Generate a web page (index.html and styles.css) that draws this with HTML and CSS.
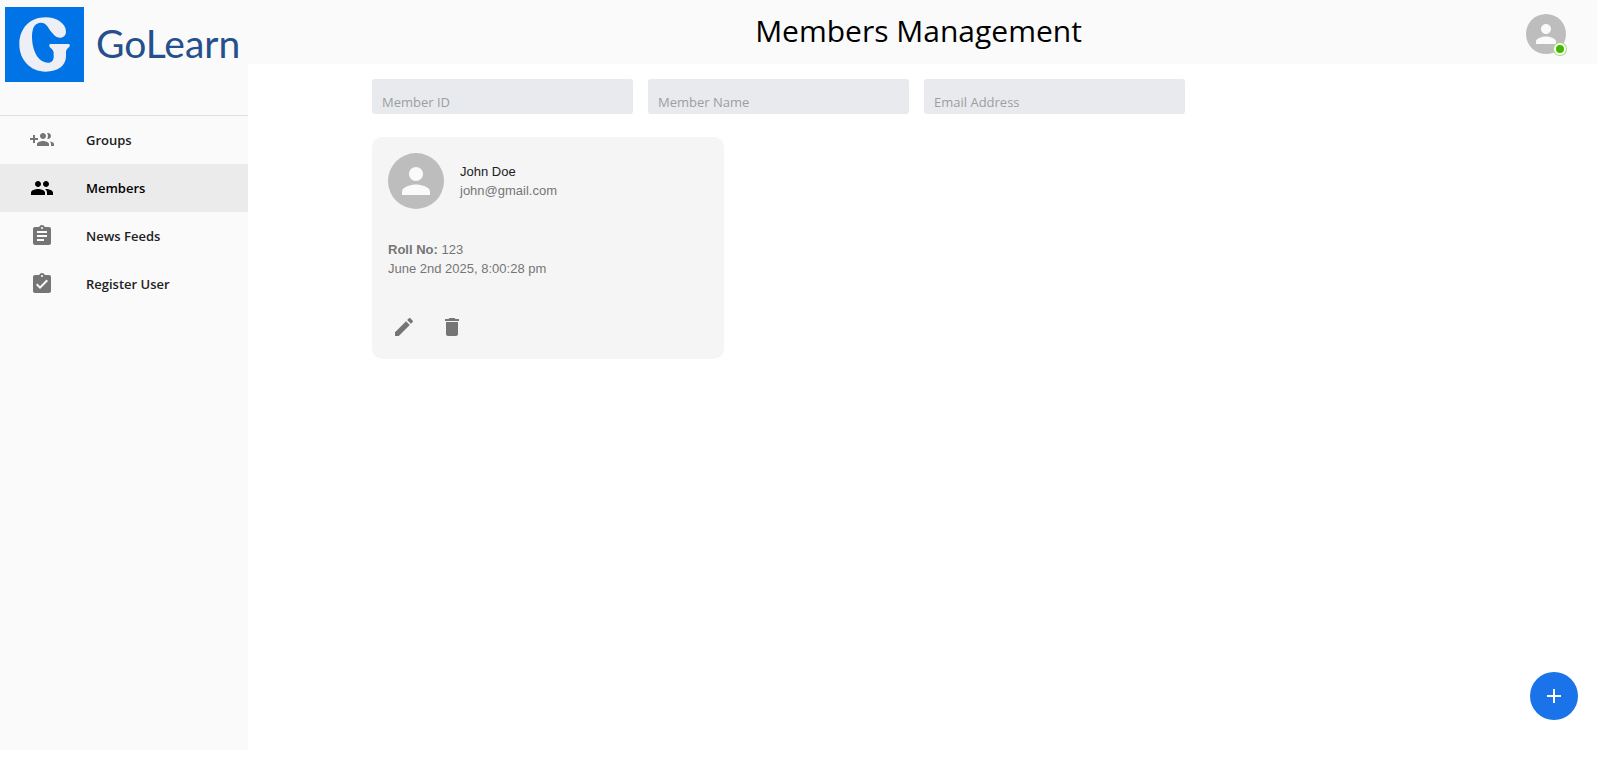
FILE: index.html
```html
<!DOCTYPE html>
<html lang="en">
<head>
<meta charset="utf-8">
<title>Members Management</title>
<link rel="stylesheet" href="styles.css">
</head>
<body>
<div class="layout">
  <aside class="sidebar">
    <a class="brand" href="#">
      <svg class="brand-mark" viewBox="0 0 237 225" preserveAspectRatio="none" aria-hidden="true">
        <rect width="237" height="225" fill="#0073e6"/>
        <path fill="#edeff5" d="M122 31C154 31 183 49 183 74C183 85 175 92 165 92C153 92 147 85 140 76C129 62 124 47 108 47C90 47 81 62 81 88C81 130 99 167 129 167C141 167 146 159 146 149V138C146 126 134 124 133 117C132 113 134 111 139 111H190C195 111 196 116 193 119C187 125 183 127 183 138V148C183 176 159 194 122 194C76 194 43 159 43 112C43 64 75 31 122 31Z"/>
      </svg>
      <span class="brand-name">GoLearn</span>
    </a>
    <nav class="nav">
      <a class="nav-item" href="#">
        <svg class="icon" viewBox="0 0 24 24" aria-hidden="true"><path d="M8 10H5V7H3v3H0v2h3v3h2v-3h3v-2zm10 1c1.66 0 2.99-1.34 2.99-3S19.66 5 18 5c-.32 0-.63.05-.91.14.57.81.9 1.79.9 2.86s-.34 2.04-.9 2.86c.28.09.59.14.91.14zm-5 0c1.66 0 2.99-1.34 2.99-3S14.66 5 13 5c-1.66 0-3 1.34-3 3s1.34 3 3 3zm6.62 2.16c.83.73 1.38 1.66 1.38 2.84v2h3v-2c0-1.54-2.37-2.49-4.38-2.84zM13 13c-2 0-6 1-6 3v2h12v-2c0-2-4-3-6-3z"/></svg>
        <span>Groups</span>
      </a>
      <a class="nav-item nav-item-active" href="#" aria-current="page">
        <svg class="icon" viewBox="0 0 24 24" aria-hidden="true"><path d="M16 11c1.66 0 2.99-1.34 2.99-3S17.66 5 16 5c-1.66 0-3 1.34-3 3s1.34 3 3 3zm-8 0c1.66 0 2.99-1.34 2.99-3S9.66 5 8 5C6.34 5 5 6.34 5 8s1.34 3 3 3zm0 2c-2.33 0-7 1.17-7 3.5V19h14v-2.5c0-2.33-4.67-3.5-7-3.5zm8 0c-.29 0-.62.02-.97.05 1.16.84 1.97 1.97 1.97 3.45V19h6v-2.5c0-2.33-4.67-3.5-7-3.5z"/></svg>
        <span>Members</span>
      </a>
      <a class="nav-item" href="#">
        <svg class="icon" viewBox="0 0 24 24" aria-hidden="true"><path d="M19 3h-4.18C14.4 1.84 13.3 1 12 1c-1.3 0-2.4.84-2.82 2H5c-1.1 0-2 .9-2 2v14c0 1.1.9 2 2 2h14c1.1 0 2-.9 2-2V5c0-1.1-.9-2-2-2zm-7 0c.55 0 1 .45 1 1s-.45 1-1 1-1-.45-1-1 .45-1 1-1zm2 14H7v-2h7v2zm3-4H7v-2h10v2zm0-4H7V7h10v2z"/></svg>
        <span>News Feeds</span>
      </a>
      <a class="nav-item" href="#">
        <svg class="icon" viewBox="0 0 24 24" aria-hidden="true"><path d="M19 3h-4.18C14.4 1.84 13.3 1 12 1c-1.3 0-2.4.84-2.82 2H5c-1.1 0-2 .9-2 2v14c0 1.1.9 2 2 2h14c1.1 0 2-.9 2-2V5c0-1.1-.9-2-2-2zm-7 0c.55 0 1 .45 1 1s-.45 1-1 1-1-.45-1-1 .45-1 1-1zm-2 14l-4-4 1.41-1.41L10 14.17l6.59-6.59L18 9l-8 8z"/></svg>
        <span>Register User</span>
      </a>
    </nav>
  </aside>
  <div class="page">
    <header class="header">
      <h1 class="title">Members Management</h1>
      <button class="account" type="button" aria-label="Account">
        <span class="avatar"><svg class="avatar-icon" viewBox="0 0 24 24" aria-hidden="true"><path d="M12 12c2.21 0 4-1.79 4-4s-1.79-4-4-4-4 1.79-4 4 1.79 4 4 4zm0 2c-2.67 0-8 1.34-8 4v2h16v-2c0-2.66-5.33-4-8-4z"/></svg></span>
        <span class="status"></span>
      </button>
    </header>
    <main class="content">
      <form class="filters">
        <input class="filter" type="text" placeholder="Member ID" aria-label="Member ID">
        <input class="filter" type="text" placeholder="Member Name" aria-label="Member Name">
        <input class="filter" type="text" placeholder="Email Address" aria-label="Email Address">
      </form>
      <div class="cards">
        <article class="card">
          <div class="card-head">
            <span class="avatar avatar-large"><svg class="avatar-icon" viewBox="0 0 24 24" aria-hidden="true"><path d="M12 12c2.21 0 4-1.79 4-4s-1.79-4-4-4-4 1.79-4 4 1.79 4 4 4zm0 2c-2.67 0-8 1.34-8 4v2h16v-2c0-2.66-5.33-4-8-4z"/></svg></span>
            <div>
              <p class="member-name">John Doe</p>
              <p>john@gmail.com</p>
            </div>
          </div>
          <div class="card-body">
            <p><strong>Roll No:</strong> 123</p>
            <p>June 2nd 2025, 8:00:28 pm</p>
          </div>
          <div class="card-actions">
            <button class="icon-button" type="button" aria-label="Edit"><svg class="icon" viewBox="0 0 24 24" aria-hidden="true"><path d="M3 17.25V21h3.75L17.81 9.94l-3.75-3.75L3 17.25zM20.71 7.04c.39-.39.39-1.02 0-1.41l-2.34-2.34c-.39-.39-1.02-.39-1.41 0l-1.83 1.83 3.75 3.75 1.83-1.83z"/></svg></button>
            <button class="icon-button" type="button" aria-label="Delete"><svg class="icon" viewBox="0 0 24 24" aria-hidden="true"><path d="M6 19c0 1.1.9 2 2 2h8c1.1 0 2-.9 2-2V7H6v12zM19 4h-3.5l-1-1h-5l-1 1H5v2h14V4z"/></svg></button>
          </div>
        </article>
      </div>
    </main>
  </div>
</div>
<button class="fab" type="button" aria-label="Add member"><svg class="icon" viewBox="0 0 24 24" aria-hidden="true"><path d="M19 13h-6v6h-2v-6H5v-2h6V5h2v6h6v2z"/></svg></button>
</body>
</html>
```
FILE: styles.css
```css
* {
  box-sizing: border-box;
}

body {
  margin: 0;
  background: #fff;
  color: #000;
  font-family: "Open Sans", "Noto Sans", sans-serif;
  font-size: 13px;
}

h1,
p {
  margin: 0;
}

button {
  padding: 0;
  border: 0;
  background: none;
  cursor: pointer;
}

.layout {
  display: flex;
  min-height: calc(100vh - 14px);
}

.sidebar {
  flex: 0 0 248px;
  background: #fafafa;
}

.brand {
  display: flex;
  align-items: flex-start;
  gap: 12px;
  height: 116px;
  padding: 7px 0 0 5px;
  border-bottom: 1px solid #e0e0e0;
  text-decoration: none;
}

.brand-mark {
  flex: none;
  width: 79px;
  height: 75px;
}

.brand-name {
  color: #24508c;
  font-family: Lato, sans-serif;
  font-size: 39px;
  line-height: 73px;
}

.nav-item {
  display: flex;
  align-items: center;
  gap: 32px;
  height: 48px;
  padding: 0 30px;
  color: #212121;
  font-weight: 600;
  text-decoration: none;
}

.nav-item .icon {
  color: #757575;
}

.nav-item-active,
.nav-item-active .icon {
  color: #000;
}

.nav-item-active {
  background: #ebebeb;
}

.icon {
  display: block;
  flex: none;
  width: 24px;
  height: 24px;
  fill: currentColor;
}

.page {
  flex: 1;
  min-width: 0;
}

.header {
  display: flex;
  align-items: center;
  height: 64px;
  padding: 4px 31px 0;
  background: #fafafa;
}

.title {
  flex: 1;
  padding: 0 0 6px 32px;
  font-size: 30px;
  font-weight: 400;
  line-height: 54px;
  text-align: center;
}

.account {
  position: relative;
}

.avatar {
  display: flex;
  align-items: center;
  justify-content: center;
  flex: none;
  width: 40px;
  height: 40px;
  border-radius: 50%;
  background: #bdbdbd;
  color: #fafafa;
}

.avatar-large {
  width: 56px;
  height: 56px;
}

.avatar-icon {
  width: 75%;
  height: 75%;
  fill: currentColor;
}

.status {
  position: absolute;
  right: 0;
  bottom: -1px;
  width: 12px;
  height: 12px;
  border: 2px solid #fff;
  border-radius: 50%;
  background: #44b700;
  box-shadow: 0 0 0 1px #a2db80;
}

.content {
  padding: 15px 121px 15px 124px;
}

.filters {
  display: flex;
  gap: 15px;
}

.filter {
  width: calc(25% - 15px);
  min-width: 0;
  height: 35px;
  padding: 11px 10px 0;
  border: 0;
  border-radius: 3px;
  background: #e8eaed;
  font: inherit;
}

.filter::placeholder {
  color: #9e9e9e;
}

.cards {
  display: grid;
  grid-template-columns: repeat(3, 1fr);
  gap: 24px;
  margin-top: 23px;
}

.card {
  padding: 16px 16px 12px;
  border-radius: 10px;
  background: #f5f5f5;
  color: #757575;
  font-family: "Liberation Sans", Arial, sans-serif;
  font-size: 13px;
  line-height: 19px;
}

.card-head {
  display: flex;
  align-items: center;
  gap: 16px;
}

.member-name {
  color: #212121;
}

.card-body {
  padding: 31px 0 29px;
}

.card-actions {
  display: flex;
  gap: 8px;
  margin-left: -4px;
}

.icon-button {
  padding: 8px;
  color: #757575;
}

.fab {
  position: fixed;
  right: 19px;
  bottom: 44px;
  display: flex;
  align-items: center;
  justify-content: center;
  width: 48px;
  height: 48px;
  border-radius: 50%;
  background: #1a73e8;
  color: #fff;
}
```
